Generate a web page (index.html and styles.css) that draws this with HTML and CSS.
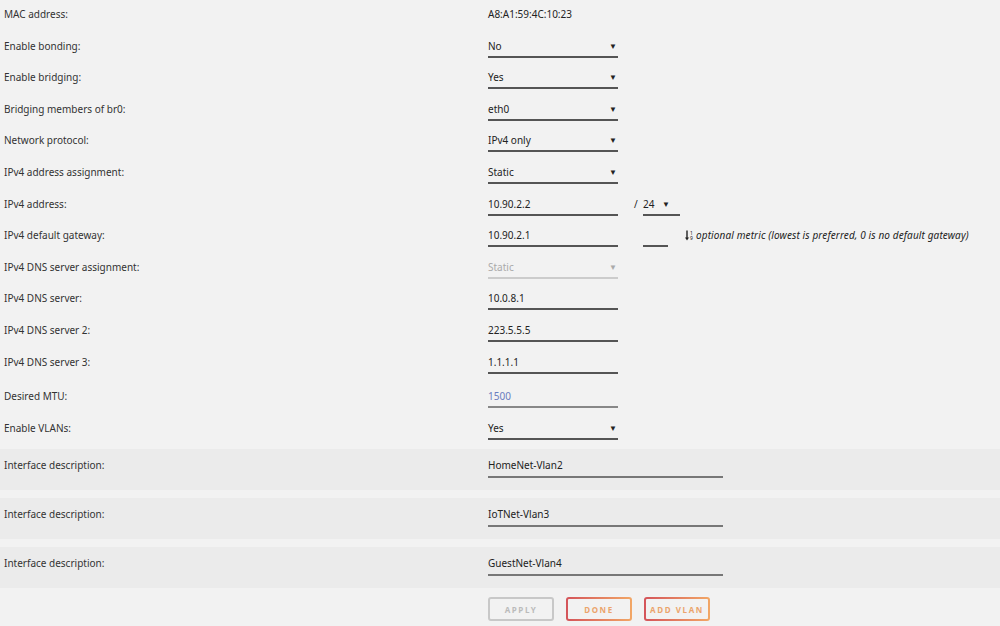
FILE: index.html
```html
<!DOCTYPE html>
<html lang="en">
<head>
<meta charset="UTF-8">
<meta name="viewport" content="width=device-width, initial-scale=1.0">
<title>Interface settings</title>
<link rel="stylesheet" href="styles.css">
</head>
<body>
<div class="form">
    <div class="row">
        <div class="label">MAC address:</div>
        <div class="value">A8:A1:59:4C:10:23</div>
    </div>
    <div class="row">
        <div class="label">Enable bonding:</div>
        <div class="field select">No<span class="caret">&#9660;</span></div>
    </div>
    <div class="row">
        <div class="label">Enable bridging:</div>
        <div class="field select">Yes<span class="caret">&#9660;</span></div>
    </div>
    <div class="row">
        <div class="label">Bridging members of br0:</div>
        <div class="field select">eth0<span class="caret">&#9660;</span></div>
    </div>
    <div class="row">
        <div class="label">Network protocol:</div>
        <div class="field select">IPv4 only<span class="caret">&#9660;</span></div>
    </div>
    <div class="row">
        <div class="label">IPv4 address assignment:</div>
        <div class="field select">Static<span class="caret">&#9660;</span></div>
    </div>
    <div class="row">
        <div class="label">IPv4 address:</div>
        <div class="inline">
            <div class="field">10.90.2.2</div>
            <span class="slash">/</span>
            <div class="field select prefix">24<span class="caret">&#9660;</span></div>
        </div>
    </div>
    <div class="row">
        <div class="label">IPv4 default gateway:</div>
        <div class="inline">
            <div class="field">10.90.2.1</div>
            <div class="field metric"></div>
            <svg class="sort-icon" width="9" height="11" viewBox="0 0 9 11">
                <path d="M2 0.5 V9" stroke="#222" stroke-width="1.4"/>
                <path d="M0 7.5 L2 10.5 L4 7.5 Z" fill="#222"/>
                <text x="5" y="4.6" font-size="5" font-family="Noto Sans, sans-serif" fill="#222">1</text>
                <text x="5" y="10.2" font-size="5" font-family="Noto Sans, sans-serif" fill="#222">9</text>
            </svg>
            <span class="hint">optional metric (lowest is preferred, 0 is no default gateway)</span>
        </div>
    </div>
    <div class="row">
        <div class="label">IPv4 DNS server assignment:</div>
        <div class="field select disabled">Static<span class="caret">&#9660;</span></div>
    </div>
    <div class="row">
        <div class="label">IPv4 DNS server:</div>
        <div class="field">10.0.8.1</div>
    </div>
    <div class="row">
        <div class="label">IPv4 DNS server 2:</div>
        <div class="field">223.5.5.5</div>
    </div>
    <div class="row">
        <div class="label">IPv4 DNS server 3:</div>
        <div class="field">1.1.1.1</div>
    </div>
    <div class="row mtu">
        <div class="label">Desired MTU:</div>
        <div class="field placeholder">1500</div>
    </div>
    <div class="row">
        <div class="label">Enable VLANs:</div>
        <div class="field select">Yes<span class="caret">&#9660;</span></div>
    </div>
</div>

<div class="vlans">
    <div class="vlan">
        <div class="label">Interface description:</div>
        <div class="field wide">HomeNet-Vlan2</div>
    </div>
    <div class="vlan">
        <div class="label">Interface description:</div>
        <div class="field wide">IoTNet-Vlan3</div>
    </div>
    <div class="vlan">
        <div class="label">Interface description:</div>
        <div class="field wide">GuestNet-Vlan4</div>
    </div>
</div>

<div class="actions">
    <button class="btn" disabled>APPLY</button>
    <button class="btn accent">DONE</button>
    <button class="btn accent">ADD VLAN</button>
</div>
</body>
</html>
```

FILE: styles.css
```css
body {
    font-family: "Noto Sans", "Open Sans", sans-serif;
    font-size: 10px;
    color: #333;
    margin: 0;
    background-color: #f2f2f2;
}

.row {
    display: grid;
    grid-template-columns: 484px 1fr;
    align-items: start;
    height: 31.6px;
    padding: 8px 0 0 4px;
    box-sizing: border-box;
}

.row.mtu {
    margin-top: 3px;
}

.label,
.value {
    line-height: 12px;
}

.value {
    color: #222;
}

.field {
    width: 130px;
    height: 12px;
    line-height: 12px;
    padding-bottom: 4px;
    border-bottom: 2px solid #555;
    color: #222;
    white-space: nowrap;
}

.select {
    display: flex;
    justify-content: space-between;
    padding-right: 1px;
    width: 129px;
}

.caret {
    font-size: 8px;
    color: #222;
}

.disabled {
    color: #aaa;
    border-bottom-color: #ccc;
}

.disabled .caret {
    color: #aaa;
}

.placeholder {
    color: #6a7cc0;
    border-bottom-color: #888;
}

.inline {
    display: flex;
    align-items: flex-start;
}

.slash {
    margin: 0 3px 0 16px;
    width: 6px;
    line-height: 12px;
    color: #222;
}

.prefix {
    width: 27px;
    padding-right: 10px;
}

.metric {
    width: 25px;
    margin-left: 25px;
}

.sort-icon {
    margin: 1px 2px 0 17px;
}

.hint {
    font-style: italic;
    line-height: 12px;
    letter-spacing: 0.12px;
    color: #222;
}

.vlans {
    display: flex;
    flex-direction: column;
    gap: 8px;
    margin-top: 4px;
}

.vlan {
    display: grid;
    grid-template-columns: 484px 1fr;
    align-items: start;
    height: 41px;
    padding: 10px 0 0 4px;
    box-sizing: border-box;
    background-color: #ebebeb;
}

.vlan .field {
    padding-bottom: 5px;
}

.wide {
    width: 235px;
    border-bottom-color: #777;
}

.actions {
    display: flex;
    gap: 12px;
    padding: 9px 0 0 488px;
}

.btn {
    width: 66px;
    height: 24px;
    padding: 0;
    white-space: nowrap;
    font-family: inherit;
    font-size: 8px;
    font-weight: bold;
    letter-spacing: 1.6px;
    color: #bbb;
    background: #f2f2f2;
    border: 2px solid #c8c8c8;
    border-radius: 3px;
    cursor: pointer;
}

.btn.accent {
    color: #eba46c;
    border-color: transparent;
    background: linear-gradient(#f2f2f2, #f2f2f2) padding-box,
                linear-gradient(90deg, #d4545a, #f2a766) border-box;
}
```
